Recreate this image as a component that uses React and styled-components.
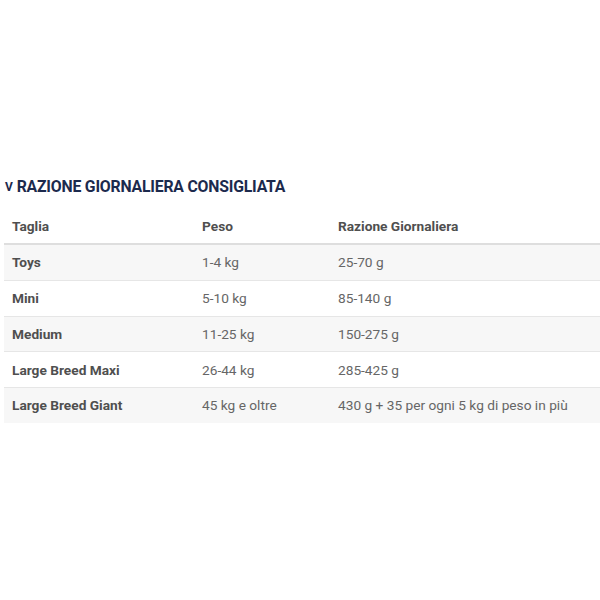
import styled, { createGlobalStyle } from "styled-components";

const GlobalStyle = createGlobalStyle`
  body {
    margin: 0;
    background: #ffffff;
    font-family: "Roboto", "Liberation Sans", sans-serif;
  }
`;

const Page = styled.div`
  width: 600px;
  height: 600px;
  padding-top: 177px;
  box-sizing: border-box;
`;

const Title = styled.h3`
  margin: 0 0 0 5px;

  display: flex;
  align-items: center;
  gap: 4px;

  color: #1c2a4d;
  font-size: 15.8px;
  font-weight: 700;
  line-height: 20px;
  text-transform: uppercase;
  letter-spacing: -0.2px;
`;

const Chevron = styled.span`
  font-size: 12px;
  font-weight: 700;
  line-height: 20px;
`;

const Table = styled.table`
  margin: 11px 0 0 4px;
  width: 596px;
  border-collapse: collapse;

  font-size: 13.7px;
  color: #5a5a5a;
`;

const HeadCell = styled.th`
  padding: 0 8px;
  height: 35px;

  border-bottom: 2px solid #dedede;

  text-align: left;
  font-weight: 700;
  color: #4f4f4f;
  width: ${ props => props.width || "auto" };
`;

const Row = styled.tr`
  background-color: ${ props => (props.striped ? "#f7f7f7" : "#ffffff") };
  border-bottom: ${ props => (props.last ? "none" : "1px solid #e6e6e6") };
`;

const Cell = styled.td`
  padding: 0 8px;
  height: 34.75px;

  font-weight: ${ props => (props.bold ? 700 : 400) };
  color: ${ props => (props.bold ? "#4f4f4f" : "#666666") };
`;

const rows = [
  ["Toys", "1-4 kg", "25-70 g"],
  ["Mini", "5-10 kg", "85-140 g"],
  ["Medium", "11-25 kg", "150-275 g"],
  ["Large Breed Maxi", "26-44 kg", "285-425 g"],
  ["Large Breed Giant", "45 kg e oltre", "430 g + 35 per ogni 5 kg di peso in più"],
];

export default function App() {
  return (
    <Page>
      <GlobalStyle />
      <Title>
        <Chevron>v</Chevron>
        Razione giornaliera consigliata
      </Title>
      <Table>
        <thead>
          <tr>
            <HeadCell width="174px">Taglia</HeadCell>
            <HeadCell width="120px">Peso</HeadCell>
            <HeadCell>Razione Giornaliera</HeadCell>
          </tr>
        </thead>
        <tbody>
          {rows.map((row, index) => (
            <Row key={ row[0] } striped={ index % 2 === 0 } last={ index === rows.length - 1 }>
              <Cell bold>{ row[0] }</Cell>
              <Cell>{ row[1] }</Cell>
              <Cell>{ row[2] }</Cell>
            </Row>
          ))}
        </tbody>
      </Table>
    </Page>
  );
}
